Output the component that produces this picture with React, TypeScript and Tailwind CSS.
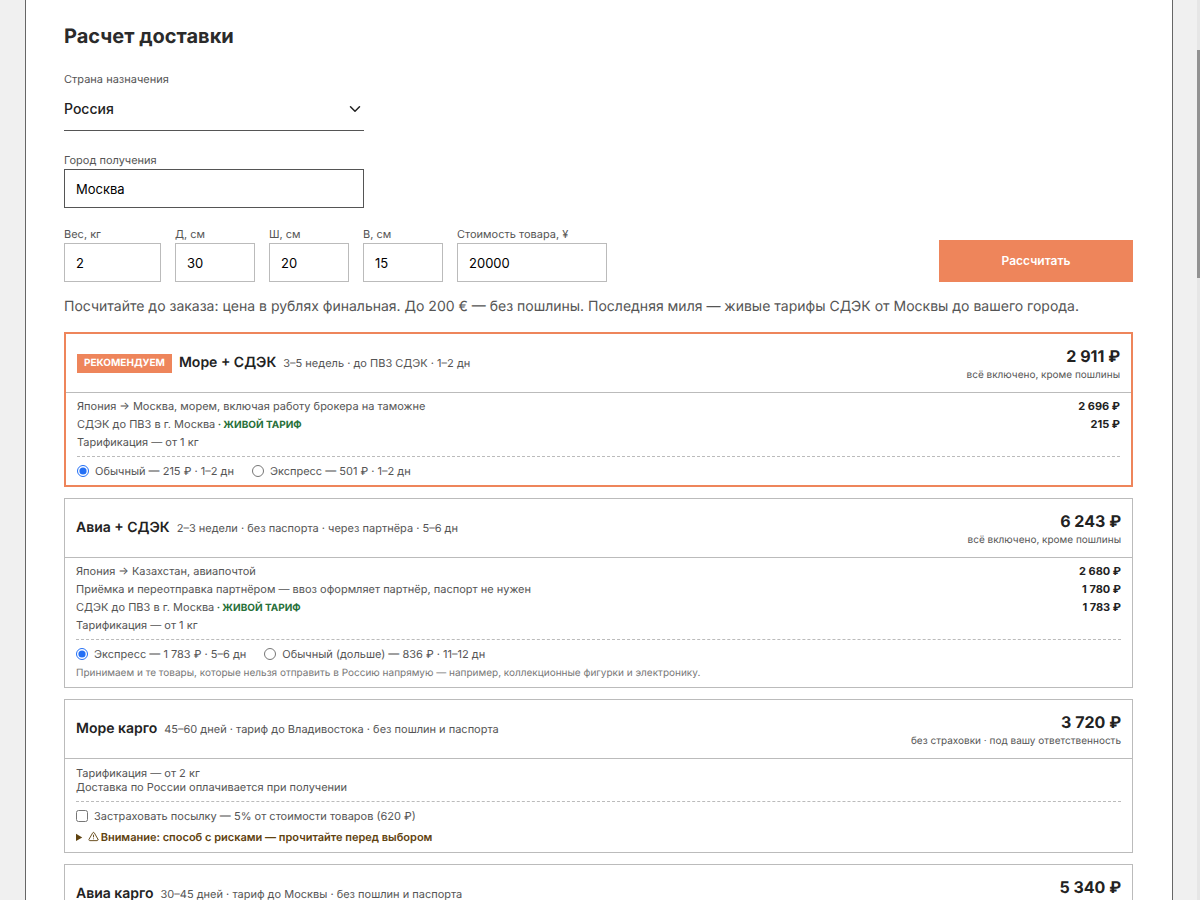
import { ReactNode, useState } from "react";
import { ChevronDown, TriangleAlert } from "lucide-react";

interface Row {
  label: string;
  live?: boolean;
  price?: string;
}

interface Tariff {
  id: string;
  title: string;
  meta: string;
  price: string;
  priceNote: string;
  recommended?: boolean;
  rows: Row[];
  options?: string[];
  note?: string;
}

const directTariffs: Tariff[] = [
  {
    id: "sea-cdek",
    title: "Море + СДЭК",
    meta: "3–5 недель · до ПВЗ СДЭК · 1–2 дн",
    price: "2 911 ₽",
    priceNote: "всё включено, кроме пошлины",
    recommended: true,
    rows: [
      { label: "Япония → Москва, морем, включая работу брокера на таможне", price: "2 696 ₽" },
      { label: "СДЭК до ПВЗ в г. Москва", live: true, price: "215 ₽" },
    ],
    options: ["Обычный — 215 ₽ · 1–2 дн", "Экспресс — 501 ₽ · 1–2 дн"],
  },
  {
    id: "air-cdek",
    title: "Авиа + СДЭК",
    meta: "2–3 недели · без паспорта · через партнёра · 5–6 дн",
    price: "6 243 ₽",
    priceNote: "всё включено, кроме пошлины",
    rows: [
      { label: "Япония → Казахстан, авиапочтой", price: "2 680 ₽" },
      { label: "Приёмка и переотправка партнёром — ввоз оформляет партнёр, паспорт не нужен", price: "1 780 ₽" },
      { label: "СДЭК до ПВЗ в г. Москва", live: true, price: "1 783 ₽" },
    ],
    options: ["Экспресс — 1 783 ₽ · 5–6 дн", "Обычный (дольше) — 836 ₽ · 11–12 дн"],
    note: "Принимаем и те товары, которые нельзя отправить в Россию напрямую — например, коллекционные фигурки и электронику.",
  },
];

const cargoTariffs: Tariff[] = [
  {
    id: "sea-cargo",
    title: "Море карго",
    meta: "45–60 дней · тариф до Владивостока · без пошлин и паспорта",
    price: "3 720 ₽",
    priceNote: "без страховки · под вашу ответственность",
    rows: [],
  },
  {
    id: "air-cargo",
    title: "Авиа карго",
    meta: "30–45 дней · тариф до Москвы · без пошлин и паспорта",
    price: "5 340 ₽",
    priceNote: "без страховки · под вашу ответственность",
    rows: [],
  },
];

const sizes = [
  { id: "weight", label: "Вес, кг", value: "2", width: "w-[97px]" },
  { id: "length", label: "Д, см", value: "30", width: "w-20" },
  { id: "width", label: "Ш, см", value: "20", width: "w-20" },
  { id: "height", label: "В, см", value: "15", width: "w-20" },
  { id: "cost", label: "Стоимость товара, ¥", value: "20000", width: "w-[150px]" },
];

const TariffCard = ({ tariff, children }: { tariff: Tariff; children: ReactNode }) => (
  <article className={tariff.recommended ? "border-2 border-[#ee855b]" : "border border-[#bbb]"}>
    <header className="flex h-[59px] items-center justify-between border-b border-[#bbb] px-[11px]">
      <div className="flex items-center gap-[7px]">
        {tariff.recommended && (
          <span className="bg-[#ee855b] px-[7px] text-[10px] leading-[19px] font-bold text-white">
            РЕКОМЕНДУЕМ
          </span>
        )}
        <h2 className="text-sm font-semibold text-[#222]">{tariff.title}</h2>
        <span className="text-[11px]">{tariff.meta}</span>
      </div>
      <div className="pt-1 text-right">
        <div className="text-base leading-5 font-bold text-[#222]">{tariff.price}</div>
        <div className="text-[10px] leading-[18px]">{tariff.priceNote}</div>
      </div>
    </header>
    <div className="px-[11px] pt-1 pb-[7px] text-[11px]">{children}</div>
  </article>
);

const DirectTariff = ({ tariff }: { tariff: Tariff }) => {
  const [selected, setSelected] = useState(0);

  return (
    <TariffCard tariff={tariff}>
      <ul>
        {tariff.rows.map(row => (
          <li key={row.label} className="flex justify-between leading-[18px]">
            <span>
              {row.label}
              {row.live && <b className="text-[10px] font-bold text-[#28703a]"> · ЖИВОЙ ТАРИФ</b>}
            </span>
            <b className="font-bold text-[#222]">{row.price}</b>
          </li>
        ))}
        <li className="leading-[17px]">Тарификация — от 1 кг</li>
      </ul>
      <div className="mt-[5px] flex gap-[18px] border-t border-dashed border-[#bbb] pt-[7px]">
        {tariff.options?.map((option, index) => (
          <label key={option} className="flex items-center gap-[6px] leading-[14px]">
            <input
              type="radio"
              name={tariff.id}
              className="size-3 accent-[#236ff5]"
              checked={selected === index}
              onChange={() => setSelected(index)}
            />
            {option}
          </label>
        ))}
      </div>
      {tariff.note && <p className="mt-[6px] text-[10px] leading-[13px] text-[#777]">{tariff.note}</p>}
    </TariffCard>
  );
};

const CargoTariff = ({ tariff }: { tariff: Tariff }) => (
  <TariffCard tariff={tariff}>
    <div className="pt-[3px] leading-[14px]">
      <p>Тарификация — от 2 кг</p>
      <p>Доставка по России оплачивается при получении</p>
    </div>
    <div className="mt-[7px] border-t border-dashed border-[#bbb] pt-[7px]">
      <label className="flex items-center gap-[6px] leading-[14px]">
        <input type="checkbox" className="size-3" />
        Застраховать посылку — 5% от стоимости товаров (620 ₽)
      </label>
    </div>
    <details className="mt-[7px] pb-px">
      <summary className="leading-[14px] font-semibold text-[#5f4310]">
        <TriangleAlert size={11} strokeWidth={2} className="mr-[2px] inline align-[-1px]" />
        Внимание: способ с рисками — прочитайте перед выбором
      </summary>
      <p>Груз едет без страховки, ответственность за сохранность несёт получатель.</p>
    </details>
  </TariffCard>
);

export default function App() {
  return (
    <div className="flex h-screen overflow-hidden bg-[#f0f0f0] pl-[25px] font-['Inter','Liberation_Sans',sans-serif] text-[#555] [text-rendering:geometricPrecision]">
      <main className="mr-6 min-w-0 flex-1 border-x border-[#666] bg-white pt-[21px] pr-[39px] pl-[38px]">
        <h1 className="text-xl leading-[30px] font-bold text-[#2b2b2b]">Расчет доставки</h1>

        <form onSubmit={e => e.preventDefault()}>
          <div className="mt-5 w-[300px]">
            <label htmlFor="country" className="block text-[11px] leading-4">
              Страна назначения
            </label>
            <div className="relative">
              <select
                id="country"
                className="block h-11 w-full appearance-none border-b border-[#555] bg-transparent pt-px text-sm font-medium text-[#222]"
              >
                <option>Россия</option>
                <option>Казахстан</option>
              </select>
              <ChevronDown
                size={18}
                strokeWidth={2}
                className="pointer-events-none absolute top-[13px] right-0 text-[#222]"
              />
            </div>
          </div>

          <div className="mt-[21px] w-[300px]">
            <label htmlFor="city" className="block text-[11px] leading-4">
              Город получения
            </label>
            <input
              id="city"
              defaultValue="Москва"
              className="mt-px block h-[39px] w-full border border-[#555] px-[11px] text-[13px] text-black"
            />
          </div>

          <div className="mt-[18px] flex items-end justify-between">
            <div className="flex gap-[14px]">
              {sizes.map(size => (
                <div key={size.id} className={size.width}>
                  <label htmlFor={size.id} className="block text-[11px] leading-4 whitespace-nowrap">
                    {size.label}
                  </label>
                  <input
                    id={size.id}
                    defaultValue={size.value}
                    className="mt-px block h-[39px] w-full border border-[#bbb] px-[11px] text-[13px] text-black"
                  />
                </div>
              ))}
            </div>
            <button type="submit" className="h-[42px] w-[194px] bg-[#ee855b] text-xs font-semibold text-white">
              Рассчитать
            </button>
          </div>
        </form>

        <p className="mt-[15px] text-sm leading-5">
          Посчитайте до заказа: цена в рублях финальная. До 200 € — без пошлины. Последняя миля — живые тарифы СДЭК от
          Москвы до вашего города.
        </p>

        <section className="mt-[15px] space-y-[11px]">
          {directTariffs.map(tariff => (
            <DirectTariff key={tariff.id} tariff={tariff} />
          ))}
          {cargoTariffs.map(tariff => (
            <CargoTariff key={tariff.id} tariff={tariff} />
          ))}
        </section>
      </main>
      <div className="w-[3px] bg-[#e6e6e6] pt-[50px]">
        <div className="h-[228px] bg-[#929292]" />
      </div>
    </div>
  );
}
